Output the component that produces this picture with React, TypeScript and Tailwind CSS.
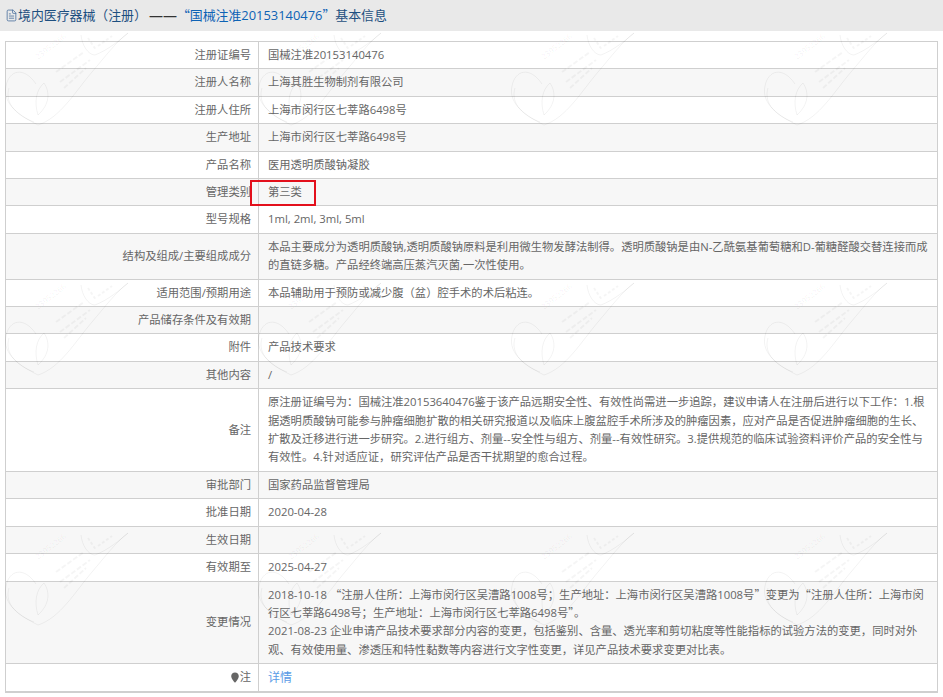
import { FileText } from "lucide-react";

const rows: { label: string; value?: string[]; boxed?: boolean }[] = [
  { label: "注册证编号", value: ["国械注准20153140476"] },
  { label: "注册人名称", value: ["上海其胜生物制剂有限公司"] },
  { label: "注册人住所", value: ["上海市闵行区七莘路6498号"] },
  { label: "生产地址", value: ["上海市闵行区七莘路6498号"] },
  { label: "产品名称", value: ["医用透明质酸钠凝胶"] },
  { label: "管理类别", value: ["第三类"], boxed: true },
  { label: "型号规格", value: ["1ml, 2ml, 3ml, 5ml"] },
  {
    label: "结构及组成/主要组成成分",
    value: [
      "本品主要成分为透明质酸钠,透明质酸钠原料是利用微生物发酵法制得。透明质酸钠是由N-乙酰氨基葡萄糖和D-葡糖醛酸交替连接而成",
      "的直链多糖。产品经终端高压蒸汽灭菌,一次性使用。",
    ],
  },
  { label: "适用范围/预期用途", value: ["本品辅助用于预防或减少腹(盆)腔手术的术后粘连。"] },
  { label: "产品储存条件及有效期" },
  { label: "附件", value: ["产品技术要求"] },
  { label: "其他内容", value: ["/"] },
  {
    label: "备注",
    value: [
      "原注册证编号为:国械注准20153640476鉴于该产品远期安全性、有效性尚需进一步追踪,建议申请人在注册后进行以下工作:1.根",
      "据透明质酸钠可能参与肿瘤细胞扩散的相关研究报道以及临床上腹盆腔手术所涉及的肿瘤因素,应对产品是否促进肿瘤细胞的生长、",
      "扩散及迁移进行进一步研究。2.进行组方、剂量--安全性与组方、剂量--有效性研究。3.提供规范的临床试验资料评价产品的安全性与",
      "有效性。4.针对适应证,研究评估产品是否干扰期望的愈合过程。",
    ],
  },
  { label: "审批部门", value: ["国家药品监督管理局"] },
  { label: "批准日期", value: ["2020-04-28"] },
  { label: "生效日期" },
  { label: "有效期至", value: ["2025-04-27"] },
  {
    label: "变更情况",
    value: [
      "2018-10-18 “注册人住所:上海市闵行区吴漕路1008号;生产地址:上海市闵行区吴漕路1008号”变更为“注册人住所:上海市闵",
      "行区七莘路6498号;生产地址:上海市闵行区七莘路6498号”。",
      "2021-08-23 企业申请产品技术要求部分内容的变更,包括鉴别、含量、透光率和剪切粘度等性能指标的试验方法的变更,同时对外",
      "观、有效使用量、渗透压和特性黏数等内容进行文字性变更,详见产品技术要求变更对比表。",
    ],
  },
];

const tiles = [0, 253, 506, 759].flatMap((x) => [0, 250, 500].map((y) => ({ x, y })));

// ascii punctuation in the data above is turned full width where the page shows it so
const wide = (s: string) =>
  s.replace(/[(]/g, "\uFF08").replace(/[)]/g, "\uFF09").replace(/:/g, "\uFF1A").replace(/;/g, "\uFF1B");

// quotes come from the CJK font so they keep their full width
function Line({ text }: { text: string }) {
  return (
    <div>
      {text.split(/([“”])/).map((part, i) =>
        part === "“" || part === "”" ? (
          <span key={i} className="font-['Noto_Sans_CJK_SC'] leading-none">{part}</span>
        ) : (
          part
        )
      )}
    </div>
  );
}

// commas: the narrow ones stay only in the 结构及组成 row
function fixCommas(line: string, label: string) {
  return label.startsWith("结构") ? line : line.replace(/,/g, (m, at) => (line[at + 1] === " " ? m : "\uFF0C"));
}

// faint lotus stamp repeated over the page
function Watermark() {
  return (
    <svg className="absolute left-0 top-0 pointer-events-none" width="943" height="697" fill="none" stroke="#000" strokeOpacity="0.05">
      <defs>
        <g id="stamp">
          <path d="M38 125C20 116 2 104 6 86C9 70 24 66 36 84" />
          <path d="M38 115C34 102 36 90 44 83C50 92 50 104 38 115Z" />
          <path d="M38 125C60 118 75 92 92 72C104 58 116 42 128 33" />
          <path d="M81 35C82 45 88 55 95 55C108 50 120 40 128 33" />
          <path d="M34 122C18 116 4 104 9 88" />
          <path d="M56 72L84 52M60 82L90 60M64 88L86 68" strokeDasharray="5 2" strokeOpacity="0.04" strokeWidth="2" />
          <path d="M88 38L96 50M98 46L112 36" strokeDasharray="3 2" strokeOpacity="0.04" strokeWidth="2" />
          <text x="0" y="0" transform="translate(38 60) rotate(-38)" fill="#000" fillOpacity="0.06" stroke="none" fontSize="8" fontFamily="Open Sans, sans-serif">
            23952266
          </text>
        </g>
      </defs>
      {tiles.map((t) => (
        <use key={`${t.x}-${t.y}`} href="#stamp" x={t.x} y={t.y} />
      ))}
    </svg>
  );
}

export default function App() {
  return (
    <div lang="zh-CN" className="relative w-[943px] h-[697px] bg-white overflow-hidden font-['Open_Sans','Noto_Sans_CJK_SC',sans-serif]">
      <div className="h-[31px] bg-[#e9e9e9] flex items-center pl-[5px] text-[12.9px] whitespace-nowrap text-[#1d4f80]">
        <FileText className="w-[13px] h-[13px] text-[#4a6f9c]" strokeWidth={1.5} />
        <span>{wide("境内医疗器械(注册)")}</span>
        <span className="ml-[2px] text-[14px] text-[#333]">——</span>
        <span className="text-[#0e63b5]"><Line text="“国械注准20153140476”" /></span>
        <span>基本信息</span>
      </div>

      <div className="mx-[5px] mt-[10px] w-[933px] border-r border-b-2 border-l border-[#cfcfcf] text-[11.3px] leading-[18.4px] text-[#666]">
        {rows.map((row, i) => (
          <div key={row.label} className={`flex border-t border-[#cfcfcf] ${i % 2 === 1 ? "bg-[#f7f7f7]" : "bg-white"}`}>
            <div className="w-[253px] shrink-0 flex items-center justify-end pr-[7px] border-r border-[#cfcfcf]">{row.label}</div>
            <div className="relative flex-1 py-[4px] pl-[9px] whitespace-nowrap min-h-[26.4px]">
              {row.value?.map((line, n) => <Line key={n} text={wide(fixCommas(line, row.label))} />)}
              {row.boxed && <div className="absolute left-[-9px] top-[1px] w-[66px] h-[26px] border-2 border-[#e3101c]" />}
            </div>
          </div>
        ))}
        <div className="flex border-t border-[#cfcfcf] bg-white">
          <div className="w-[253px] shrink-0 flex items-center justify-end gap-[1px] pr-[7px] border-r border-[#cfcfcf]">
            <svg width="8" height="11" viewBox="0 0 8 11">
              <path d="M4 0.5C6.2 0.5 7.8 2 7.8 4.2C7.8 6.6 5.4 9 4 10.8C2.6 9 0.2 6.6 0.2 4.2C0.2 2 1.8 0.5 4 0.5Z" fill="#666" />
            </svg>
            <span>注</span>
          </div>
          <div className="flex-1 pt-[5px] pb-[3px] pl-[9px]">
            <a href="#" className="text-[#5a9be6] text-[12px]">详情</a>
          </div>
        </div>
      </div>

      <Watermark />
    </div>
  );
}
